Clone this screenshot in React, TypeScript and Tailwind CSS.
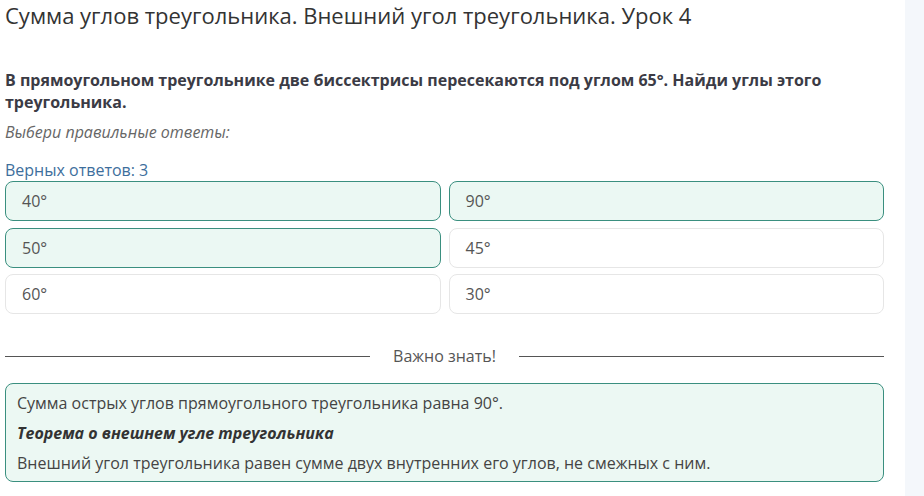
export default function App() {
  const answers = [
    { label: "40°", picked: true },
    { label: "90°", picked: true },
    { label: "50°", picked: true },
    { label: "45°", picked: false },
    { label: "60°", picked: false },
    { label: "30°", picked: false },
  ];

  return (
    <div className="flex min-h-[496px] w-[924px] bg-white font-['Open_Sans',sans-serif] text-[#333]">
      <main className="w-[905px] pl-[5px] pr-[21px]">
        <h1 className="text-[22px] leading-[30px] text-[#333]">
          Сумма углов треугольника. Внешний угол треугольника. Урок 4
        </h1>

        <p className="mt-[39px] text-[16px] font-bold leading-[22px] text-[#3b3b45]">
          В прямоугольном треугольнике две биссектрисы пересекаются под углом 65°. Найди углы этого
          треугольника.
        </p>
        <p className="mt-[8px] text-[16px] italic leading-[22px] text-[#666]">Выбери правильные ответы:</p>

        <p className="mt-[16px] text-[16px] leading-[22px] text-[#3d6e9c]">Верных ответов: 3</p>
        <div className="grid grid-cols-2 gap-x-[8px] gap-y-[6.5px]">
          {answers.map((a) => (
            <div
              key={a.label}
              className={
                a.picked
                  ? "flex h-[40px] items-center rounded-[8px] border border-[#3a8f7f] bg-[#ebf8f3] pl-[16px] text-[16px] text-[#555]"
                  : "flex h-[40px] items-center rounded-[8px] border border-[#e6e6e6] bg-white pl-[16px] text-[16px] text-[#555]"
              }
            >
              {a.label}
            </div>
          ))}
        </div>

        <div className="mt-[30px] flex items-center gap-[23px]">
          <div className="h-px flex-1 bg-[#555]" />
          <span className="text-[16px] text-[#555]">Важно знать!</span>
          <div className="h-px flex-1 bg-[#555]" />
        </div>

        <div className="mt-[15px] flex flex-col gap-[8px] rounded-[8px] border border-[#3a8f7f] bg-[#ecf8f3] px-[11px] pb-[7px] pt-[8px] text-[16px] leading-[22px] text-[#444]">
          <p>Сумма острых углов прямоугольного треугольника равна 90°.</p>
          <p className="font-bold italic text-[#333]">Теорема о внешнем угле треугольника</p>
          <p>Внешний угол треугольника равен сумме двух внутренних его углов, не смежных с ним.</p>
        </div>
      </main>
      <aside className="flex-1 bg-[#f4f7fb]" />
    </div>
  );
}
